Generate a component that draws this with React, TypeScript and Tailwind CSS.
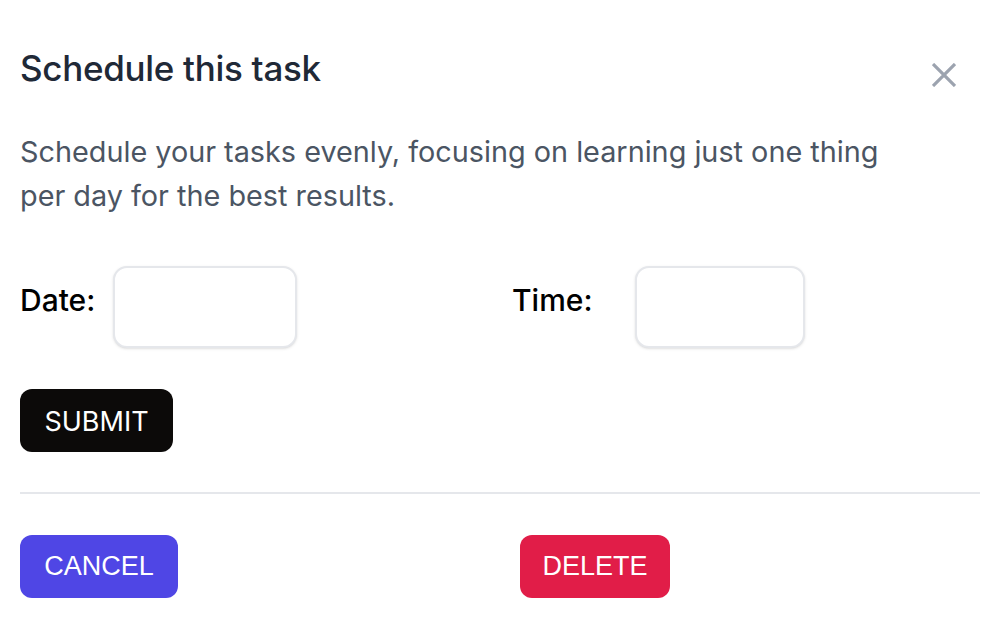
import React from 'react';

export default function App() {
    return (
        <div className="min-h-screen w-full bg-white" style={{ fontFamily: 'Inter, "Noto Sans", sans-serif' }}>
            <div className="px-5 pt-12 pb-10">
                {/* header */}
                <div className="flex justify-between items-start">
                    <h3 className="text-[35px] leading-[40px] font-medium text-[#1f2937] tracking-[-0.3px]">Schedule this task</h3>
                    <button type="button" className="mt-[15px] mr-[28px] text-[#9ca3af]" aria-label="Close">
                        <svg width="24" height="24" viewBox="0 0 24 24" fill="none" stroke="currentColor" strokeWidth="3.2" strokeLinecap="butt">
                            <path d="M1 1 L23 23 M23 1 L1 23" />
                        </svg>
                    </button>
                </div>

                <p className="mt-[42px] max-w-[890px] text-[28.8px] leading-[44px] text-[#4b5563]">
                    Schedule your tasks evenly, focusing on learning just one thing per day for the best results.
                </p>

                {/* date / time */}
                <div className="mt-[48px] flex items-center">
                    <div className="flex items-center w-[492px]">
                        <label className="pb-[14px] text-[30px] font-medium text-black">Date:</label>
                        <input type="text" className="ml-[18px] w-[184px] h-[82px] rounded-[14px] border-2 border-[#e5e7eb] shadow-sm bg-white" />
                    </div>
                    <div className="flex items-center">
                        <label className="pb-[14px] text-[30px] font-medium text-black">Time:</label>
                        <input type="text" className="ml-[42px] w-[170px] h-[82px] rounded-[14px] border-2 border-[#e5e7eb] shadow-sm bg-white" />
                    </div>
                </div>

                <button type="button" className="mt-[41px] h-[63px] w-[153px] rounded-[12px] bg-[#0c0a09] text-white text-[27px] pt-[3px]">
                    SUBMIT
                </button>

                <hr className="mt-[40px] border-t-2 border-[#e5e7eb] mr-[4px]" />

                <div className="mt-[41px] flex">
                    <div className="w-[500px]">
                        <button type="button" className="h-[63px] w-[158px] rounded-[12px] bg-[#4f46e5] text-white text-[27px]" style={{ fontFamily: '"Liberation Sans", Arial, sans-serif' }}>
                            CANCEL
                        </button>
                    </div>
                    <button type="button" className="h-[63px] w-[150px] rounded-[12px] bg-[#e11d48] text-white text-[27px]" style={{ fontFamily: '"Liberation Sans", Arial, sans-serif' }}>
                        DELETE
                    </button>
                </div>
            </div>
        </div>
    );
}
